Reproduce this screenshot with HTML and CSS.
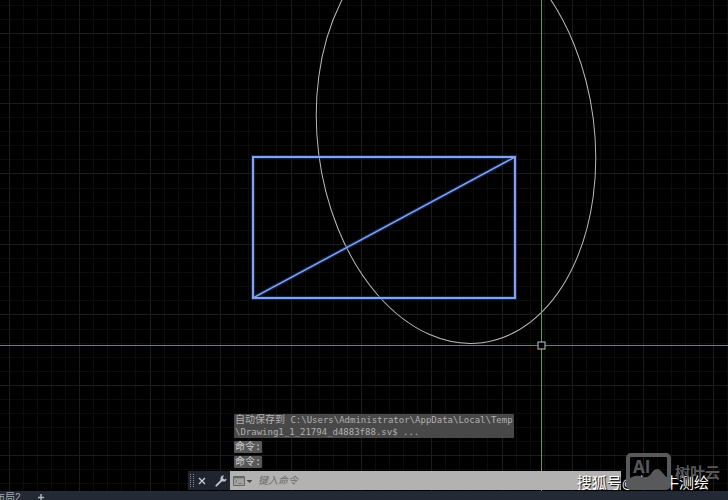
FILE: index.html
```html
<!DOCTYPE html>
<html lang="zh-CN">
<head>
  <meta charset="UTF-8" />
  <meta name="viewport" content="width=device-width, initial-scale=1.0"/>
  <title>Drawing1</title>
  <link rel="stylesheet" href="styles.css">
</head>
<body>
  <main class="workspace">
    <svg class="canvas" role="img" aria-label="Drawing">
      <defs>
        <!-- five major cells, each split in five -->
        <pattern id="grid" x="9" y="33" width="352" height="352" patternUnits="userSpaceOnUse">
          <path class="grid-minor" d="M14.5 0v352M28.5 0v352M42.5 0v352M56.5 0v352M84.5 0v352M98.5 0v352M112.5 0v352M126.5 0v352M155.5 0v352M169.5 0v352M183.5 0v352M197.5 0v352M225.5 0v352M239.5 0v352M253.5 0v352M267.5 0v352M296.5 0v352M310.5 0v352M324.5 0v352M338.5 0v352"/>
          <path class="grid-minor" d="M0 14.5h352M0 28.5h352M0 42.5h352M0 56.5h352M0 84.5h352M0 98.5h352M0 112.5h352M0 126.5h352M0 155.5h352M0 169.5h352M0 183.5h352M0 197.5h352M0 225.5h352M0 239.5h352M0 253.5h352M0 267.5h352M0 296.5h352M0 310.5h352M0 324.5h352M0 338.5h352"/>
          <path class="grid-major" d="M.5 0v352M70.5 0v352M141.5 0v352M211.5 0v352M282.5 0v352M0 .5h352M0 70.5h352M0 140.5h352M0 211.5h352M0 281.5h352"/>
        </pattern>
      </defs>
      <rect width="100%" height="100%" fill="url(#grid)"/>
      <ellipse class="curve" cx="456" cy="136.5" rx="138.4" ry="207.8" transform="rotate(-7.2 456 136.5)"/>
      <!-- selected rectangle and diagonal -->
      <path class="glow" d="M253 157H515V298H253ZM253 298L515 157"/>
      <path class="selected" d="M253 157H515V298H253Z"/>
      <path class="selected diagonal" d="M253 298L515 157"/>
      <!-- crosshair -->
      <line class="axis-x" x1="0" y1="345.5" x2="100%" y2="345.5"/>
      <line class="axis-y" x1="541.5" y1="0" x2="541.5" y2="100%"/>
      <rect class="pickbox" x="538" y="342" width="7" height="7"/>
    </svg>

    <section class="command">
      <div class="history">
        <p class="log"><span class="zh">自动保存到</span> C:\Users\Administrator\AppData\Local\Temp<br>\Drawing1_1_21794_d4883f88.sv$ ...</p>
        <p class="log prompt"><span class="zh">命令:</span></p>
        <p class="log prompt"><span class="zh">命令:</span></p>
      </div>
      <form class="command-bar">
        <svg class="grip" width="4" height="14" viewBox="0 0 4 14"><path d="M.5 0v14M3.5 0v14" stroke="#8b8e94" stroke-dasharray="1 1"/></svg>
        <button type="button" class="tool close" aria-label="关闭">
          <svg width="8" height="8" viewBox="0 0 8 8"><path d="M1 1l6 6M7 1l-6 6" stroke="#c8cace" stroke-width="1.4"/></svg>
        </button>
        <button type="button" class="tool" aria-label="自定义">
          <svg width="12" height="12" viewBox="0 0 12 12"><path d="M1.3 10.7L7 5" stroke="#c0c3c7" stroke-width="1.8" stroke-linecap="round"/><path d="M9 .6A3 3 0 1 0 11.4 3.4L9.3 4.4 7.7 2.9Z" fill="#c0c3c7"/></svg>
        </button>
        <div class="entry">
          <button type="button" class="recent" aria-label="最近使用的命令">
            <svg width="20" height="10" viewBox="0 0 20 10"><path d="M.5.5h11v9h-11z" fill="#a2a2a2" stroke="#666"/><path d="M1 1.5h10" stroke="#666" stroke-width="1.4"/><path d="M2.5 4l1.5 1.3L2.5 6.6M5.5 7.5h3" fill="none" stroke="#666" stroke-width=".8"/><path d="M13.5 4h6l-3 3z" fill="#444"/></svg>
          </button>
          <input class="field" type="text" placeholder="键入命令" aria-label="键入命令">
        </div>
      </form>
    </section>

    <div class="credit">搜狐号<span class="at">@</span>小小牛测绘</div>
    <div class="stamp">
      <svg width="45" height="37" viewBox="0 0 45 37">
        <path d="M5 0H40a5 5 0 0 1 5 5V32a5 5 0 0 1-5 5H5a5 5 0 0 1-5-5V5a5 5 0 0 1 5-5ZM5 4a1 1 0 0 0-1 1V25Q9 22 14 23 20 26 24 22L27 18Q31 14 35 18L41 25V5a1 1 0 0 0-1-1Z" fill="#58595b" fill-rule="evenodd"/>
        <text x="7" y="20" class="stamp-ai">AI</text>
      </svg>
      <span>树叶云</span>
    </div>
  </main>

  <nav class="tabs">
    <a href="#layout2" class="tab">布局2</a>
    <button type="button" class="add" aria-label="新建布局">
      <svg width="8" height="8" viewBox="0 0 8 8"><path d="M4 1v7M1 4.5h6" stroke="#b4b8be" stroke-width="1.4"/></svg>
    </button>
  </nav>
</body>
</html>
```
FILE: styles.css
```css
* {
  margin: 0;
  padding: 0;
  box-sizing: border-box;
}

body {
  display: flex;
  flex-direction: column;
  height: 100vh;
  overflow: hidden;
  background: #000;
  color: #b4b4b4;
  font-family: "Liberation Sans", "Noto Sans CJK SC", sans-serif;
  font-size: 10px;
}
button {
  border: none;
  background: none;
}
svg {
  display: block;
}

/* Drawing area */
.workspace {
  position: relative;
  flex: 1;
  min-height: 0;
}
.canvas {
  width: 100%;
  height: 100%;
}
.grid-minor {
  stroke: #0c0c0d;
}
.grid-major {
  stroke: #1b1c1d;
}
.curve {
  fill: none;
  stroke: #b9b9b9;
}
.selected {
  fill: none;
  stroke: #85a3e8;
  stroke-width: 2;
}
.diagonal {
  stroke-width: 1.5;
}
.glow {
  fill: none;
  stroke: #1c3f99;
  stroke-opacity: 0.5;
  stroke-width: 4;
}
.axis-x {
  stroke: #b0633f;
}
.axis-y {
  stroke: #649c55;
}
.pickbox {
  fill: #000;
  stroke: #c4c4c4;
}

/* Floating command line */
.command {
  position: absolute;
  left: 188px;
  right: 107px;
  bottom: 1px;
}
.history {
  display: flex;
  flex-direction: column;
  align-items: flex-start;
  gap: 3px;
  padding: 0 0 3px 46px;
}
.log {
  padding: 0 1px;
  border-radius: 1px;
  background: #484848;
  color: #b0b0b0;
  font-family: "DejaVu Sans Mono", "Noto Sans CJK SC", monospace;
  font-size: 9px;
  line-height: 12px;
  white-space: nowrap;
}
.prompt {
  background: #585858;
  color: #d0d0d0;
}
.zh {
  font-size: 10px;
}
.command-bar {
  display: flex;
  align-items: stretch;
  height: 19px;
  background: #20242e;
}
.grip {
  margin: 3px 2px;
}
.tool {
  display: flex;
  align-items: center;
  justify-content: center;
  width: 16px;
}
.close {
  width: 12px;
  margin-right: 5px;
}
.entry {
  display: flex;
  flex: 1;
  align-items: center;
  gap: 5px;
  margin-left: 1px;
  padding-left: 3px;
  background: #b2b2b2;
}
.field {
  flex: 1;
  min-width: 0;
  border: none;
  outline: none;
  background: none;
  font-family: "Liberation Sans", "Noto Sans CJK SC", sans-serif;
  font-size: 10px;
  font-style: italic;
}
.field::placeholder {
  color: #6a6a6a;
}

/* Marks in the corner */
.credit {
  position: absolute;
  right: 19px;
  bottom: -2px;
  color: #fff;
  font-size: 15px;
  line-height: 18px;
  text-shadow: 1px 1px 1px #000;
}
.at {
  font-size: 12px;
}
.stamp {
  position: absolute;
  right: 8px;
  bottom: 1px;
  display: flex;
  align-items: center;
  gap: 4px;
  color: #58595b;
  font-size: 15px;
  font-weight: bold;
}
.stamp-ai {
  fill: #58595b;
  font-family: "Open Sans", sans-serif;
  font-size: 17px;
  font-weight: bold;
}

/* Layout tabs */
.tabs {
  display: flex;
  align-items: flex-start;
  gap: 16px;
  height: 9px;
  overflow: hidden;
  background: #232935;
}
.tab {
  margin-left: -5px;
  color: #a4a8ae;
  line-height: 14px;
  text-decoration: none;
}
.add {
  padding-top: 2px;
}
```
